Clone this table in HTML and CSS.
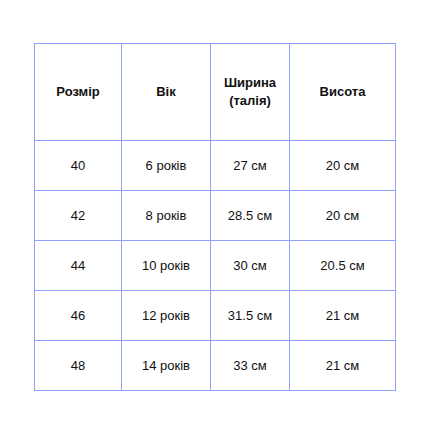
FILE: index.html
```html
<!DOCTYPE html>
<html lang="uk">
<head>
<meta charset="utf-8">
<link rel="stylesheet" href="styles.css">
</head>
<body>
<div class="wrap">
<table class="size-table">
<colgroup>
<col class="c1"><col class="c2"><col class="c3"><col class="c4">
</colgroup>
<thead>
<tr class="head"><th>Розмір</th><th>Вік</th><th>Ширина<br>(талія)</th><th>Висота</th></tr>
</thead>
<tbody>
<tr><td>40</td><td>6 років</td><td>27 см</td><td>20 см</td></tr>
<tr><td>42</td><td>8 років</td><td>28.5 см</td><td>20 см</td></tr>
<tr><td>44</td><td>10 років</td><td>30 см</td><td>20.5 см</td></tr>
<tr><td>46</td><td>12 років</td><td>31.5 см</td><td>21 см</td></tr>
<tr><td>48</td><td>14 років</td><td>33 см</td><td>21 см</td></tr>
</tbody>
</table>
</div>
</body>
</html>
```
FILE: styles.css
```css
html, body {
  margin: 0;
  padding: 0;
  background: #fff;
}
.wrap {
  padding: 43px 0 0 34px;
}
.size-table {
  border-collapse: collapse;
  table-layout: fixed;
  width: 361px;
  font-family: "Liberation Sans", Arial, sans-serif;
  font-size: 13px;
  color: #111;
}
.c1 { width: 87px; }
.c2 { width: 89px; }
.c3 { width: 79px; }
.c4 { width: 106px; }
.size-table th, .size-table td {
  border: 1px solid #8fa2ff;
  text-align: center;
  vertical-align: middle;
  padding: 0;
  height: 49px;
}
.size-table th {
  font-weight: bold;
  height: 96px;
  line-height: 18px;
}
```
